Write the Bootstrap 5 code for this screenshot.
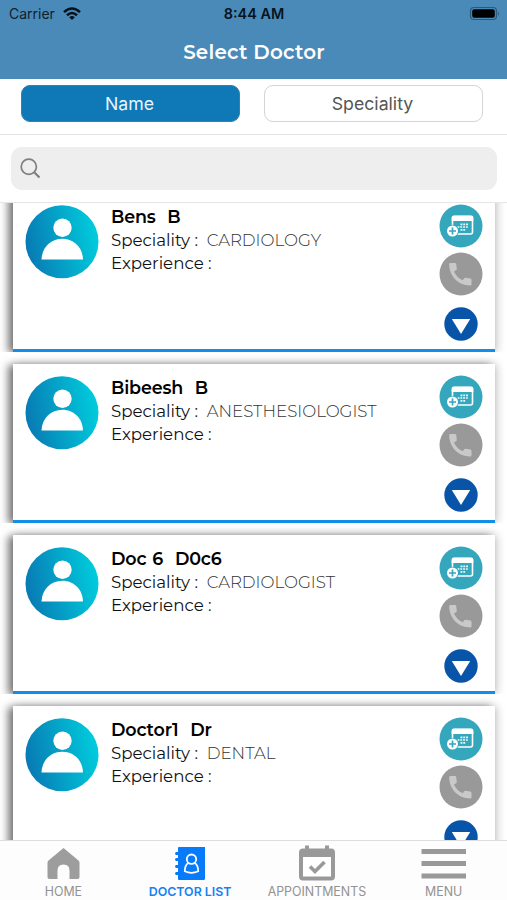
<!DOCTYPE html>
<html lang="en">
<head>
<meta charset="utf-8">
<meta name="viewport" content="width=device-width, initial-scale=1">
<title>Select Doctor</title>
<link href="https://cdn.jsdelivr.net/npm/bootstrap@5.3.0/dist/css/bootstrap.min.css" rel="stylesheet">
<style>
body{height:900px;font-family:Inter,"Liberation Sans",sans-serif;background:#fff;color:#111}
svg{display:block;flex:none}
.geo{font-family:Montserrat,Inter,sans-serif}
.app-top{height:79px;background:#4a8ab8}
.status{height:27px;padding:0 7px 0 9px;color:#10202c;font-size:14px}
.status>*{flex:1 1 0}
.clock{font-size:14.4px;font-weight:600;color:#06141f;padding-right:1px}
.screen-title{height:52px;font-size:19.9px;font-weight:600;letter-spacing:.22px;padding-left:1px}
.segments{height:56px;padding:6px 24px 0 21px;gap:24px;border-bottom:1px solid #e4e4e4}
.seg{height:37px;border-radius:9px;font-size:17.7px;padding:0 2px 0 0;line-height:35px;border:1px solid #d6d3d5;color:#555;background:#fff}
.seg.on{background:#0f78b6;border-color:#2d82b8;color:#e9f5fc}
.finder{height:68px;padding:12px 10px 12px 11px;border-bottom:1px solid #e6e6e6}
.finder-box{height:43px;border-radius:11px;background:#eee;padding-left:9px}
.doctors{min-height:0}
.slot{height:171px;padding:12px 12px 0 13px;overflow:hidden}
.slot:first-child{margin-top:-22px}
.doc{height:159px;background:#fff;border-bottom:3.5px solid #118ee8;padding:12px 12px 0 12px;box-shadow:-5px 1px 8px rgba(0,0,0,.5),2px 0 9px rgba(0,0,0,.2)}
.info{padding-left:12px;font-size:16.65px;line-height:23px;white-space:pre}
.doc-name{font-size:17.5px;font-weight:600;color:#000;letter-spacing:-.15px;word-spacing:1.2px;line-height:24px}
.val{font-weight:300;color:#333}
.acts{width:44px;margin-top:-1px}
.tabs{height:60px;border-top:1px solid #ddd;background:#fdfdfd;font-size:12.4px;color:#929292}
.tab-item{width:126.75px;padding-top:4px}
.tab-item svg{height:37px}
.tab-item span{line-height:17px;margin-top:1px;white-space:nowrap}
.tab-item.on{color:#1680f5;font-weight:600}
</style>
</head>
<body class="d-flex flex-column overflow-hidden m-0">
<svg width="0" height="0" class="position-absolute" aria-hidden="true">
<defs>
<linearGradient id="teal" x1="0" y1=".6" x2="1" y2=".4"><stop offset="0" stop-color="#0879b3"/><stop offset="1" stop-color="#00cddd"/></linearGradient>
<symbol id="person" viewBox="0 0 74 74"><circle cx="37" cy="36.700" r="36.500" fill="url(#teal)"/><circle cx="37.500" cy="22.800" r="9.200" fill="#fff"/><path d="M16.500 54.500C17 42 26 33.800 37.300 33.800S57.600 42 58 54.500Z" fill="#fff"/></symbol>
<symbol id="book" viewBox="0 0 44 44"><circle cx="22" cy="22" r="21.500" fill="#35a7bd"/><rect x="13.500" y="12.500" width="20" height="17.500" rx="2" fill="none" stroke="#fff" stroke-width="1.600"/><path d="M12.700 13.500q0-2 2-2h17.600q2 0 2 2V17H12.700Z" fill="#fff"/><path d="M21.500 20.300h8M18.500 23h11M21.500 25.800h5.500" stroke="#e8fbff" stroke-width="1.700" stroke-dasharray="1.900 .9"/><circle cx="13.500" cy="27" r="6.300" fill="#35a7bd"/><circle cx="13.500" cy="27" r="5.500" fill="#fff"/><path d="M10 27h7M13.500 23.500v7" stroke="#35a7bd" stroke-width="1.700"/></symbol>
<symbol id="call" viewBox="0 0 44 44"><circle cx="22" cy="22" r="21.500" fill="#999"/><path d="M11.500 11h4.500q1.100 0 1.200 1l.6 5q0 .9-.8 1.300l-2 1.200q2.500 6 8.800 8.800l1.400-2q.5-.8 1.400-.6l4.800.9q1.100.2 1.100 1.300v4.300q0 1.300-1.300 1.300C19 33.500 10.200 24 10.200 12.300q0-1.300 1.300-1.300Z" fill="#c9c9c9"/></symbol>
<symbol id="drop" viewBox="0 0 34 34"><circle cx="17" cy="17" r="16.700" fill="#0854a9"/><path d="M7.800 12h18.400L17 27Z" fill="#fff"/></symbol>
</defs>
</svg>

<header class="app-top flex-shrink-0">
  <div class="status d-flex align-items-center">
    <div class="d-flex align-items-center gap-2"><span>Carrier</span>
      <svg width="18" height="14" viewBox="0 0 18 14" fill="none" stroke="#06121a" stroke-width="2.500"><path d="M1 5.200Q9-2.200 17 5.200M4 8.300q5-4.500 10 0"/><path d="M6.200 10.200q2.800-2.400 5.600 0L9 13Z" fill="#06121a" stroke="none"/></svg>
    </div>
    <div class="clock text-center">8:44 AM</div>
    <div class="d-flex justify-content-end"><svg width="31" height="15" viewBox="0 0 31 15"><rect x="1.500" y="1.500" width="26" height="12" rx="3.500" fill="none" stroke="#2d5979" stroke-width="1.200"/><rect x="3.200" y="3.200" width="22.600" height="8.600" rx="2" fill="#000"/><path d="M29 5.200q2 2.300 0 4.600Z" fill="#2d5979"/></svg></div>
  </div>
  <h1 class="screen-title geo text-white d-flex align-items-center justify-content-center m-0">Select Doctor</h1>
</header>

<div class="segments d-flex flex-shrink-0">
  <button class="seg on btn flex-fill w-50">Name</button>
  <button class="seg btn flex-fill w-50">Speciality</button>
</div>
<div class="finder flex-shrink-0">
  <div class="finder-box d-flex align-items-center"><svg width="22" height="22" viewBox="0 0 22 22" fill="none" stroke="#808080"><circle cx="8.800" cy="8.800" r="7.600" stroke-width="1.700"/><path d="m14 14 5.500 5.500" stroke-width="2.200"/></svg></div>
</div>

<main class="doctors flex-fill overflow-hidden">
  <div class="slot"><article class="doc d-flex"><svg width="74" height="74"><use href="#person"/></svg><div class="info geo flex-fill"><div class="doc-name"><span>Bens  B</span></div><div><span class="key">Speciality :</span>  <span class="val">CARDIOLOGY</span></div><div><span class="key">Experience :</span></div></div><div class="acts d-flex flex-column align-items-center"><svg width="44" height="44"><use href="#book"/></svg><svg width="44" height="44" class="mt-1"><use href="#call"/></svg><svg width="34" height="34" class="mt-auto mb-2"><use href="#drop"/></svg></div></article></div>
  <div class="slot"><article class="doc d-flex"><svg width="74" height="74"><use href="#person"/></svg><div class="info geo flex-fill"><div class="doc-name"><span>Bibeesh  B</span></div><div><span class="key">Speciality :</span>  <span class="val">ANESTHESIOLOGIST</span></div><div><span class="key">Experience :</span></div></div><div class="acts d-flex flex-column align-items-center"><svg width="44" height="44"><use href="#book"/></svg><svg width="44" height="44" class="mt-1"><use href="#call"/></svg><svg width="34" height="34" class="mt-auto mb-2"><use href="#drop"/></svg></div></article></div>
  <div class="slot"><article class="doc d-flex"><svg width="74" height="74"><use href="#person"/></svg><div class="info geo flex-fill"><div class="doc-name"><span>Doc 6  D0c6</span></div><div><span class="key">Speciality :</span>  <span class="val">CARDIOLOGIST</span></div><div><span class="key">Experience :</span></div></div><div class="acts d-flex flex-column align-items-center"><svg width="44" height="44"><use href="#book"/></svg><svg width="44" height="44" class="mt-1"><use href="#call"/></svg><svg width="34" height="34" class="mt-auto mb-2"><use href="#drop"/></svg></div></article></div>
  <div class="slot"><article class="doc d-flex"><svg width="74" height="74"><use href="#person"/></svg><div class="info geo flex-fill"><div class="doc-name"><span>Doctor1  Dr</span></div><div><span class="key">Speciality :</span>  <span class="val">DENTAL</span></div><div><span class="key">Experience :</span></div></div><div class="acts d-flex flex-column align-items-center"><svg width="44" height="44"><use href="#book"/></svg><svg width="44" height="44" class="mt-1"><use href="#call"/></svg><svg width="34" height="34" class="mt-auto mb-2"><use href="#drop"/></svg></div></article></div>
</main>

<nav class="tabs d-flex flex-shrink-0">
  <div class="tab-item d-flex flex-column align-items-center"><svg width="36" height="37" viewBox="0 0 36 37"><path d="M18.500 3 33.500 15.500q1 .8 1 2V32q0 2-2 2h-8V25.500q0-6-6-6t-6 6V34h-8q-2 0-2-2V17.500q0-1.200 1-2Z" fill="#9d9d9d"/></svg><span>HOME</span></div>
  <div class="tab-item on d-flex flex-column align-items-center"><svg width="34" height="37" viewBox="0 0 34 37"><path d="M5 3q0-1 1-1h26v31.500q0 1.500-1.500 1.500H6q-1 0-1-1v-4H3q-2-1.500 0-3h2v-4H3q-2-1.500 0-3h2v-4H3q-2-1.500 0-3h2v-3H3q-2-1.500 0-3h2Z" fill="#087bfb"/><g fill="none" stroke="#fff" stroke-width="1.800"><circle cx="18.500" cy="14.200" r="4.700"/><path d="M15.300 18q-3.500 2-3.500 8.300 6.700 3 13.400 0 0-6.300-3.500-8.300"/></g></svg><span>DOCTOR LIST</span></div>
  <div class="tab-item d-flex flex-column align-items-center"><svg width="36" height="37" viewBox="0 0 36 37"><path d="M6 .5h4v3h16v-3h4v3h2q4 0 4 4v24q0 4-4 4H4q-4 0-4-4v-24q0-4 4-4h2Z" fill="#999"/><path d="M4 12h28v19.500H4Z" fill="#fff"/><path d="m11 21.500 5 5 9.500-9.500" fill="none" stroke="#999" stroke-width="3.600"/></svg><span>APPOINTMENTS</span></div>
  <div class="tab-item d-flex flex-column align-items-center"><svg width="45" height="37" viewBox="0 0 45 37"><path d="M.5 6.500h44.500M.5 18.500h44.500M.5 31h44.500" stroke="#999" stroke-width="5"/></svg><span>MENU</span></div>
</nav>
<script src="https://cdn.jsdelivr.net/npm/bootstrap@5.3.0/dist/js/bootstrap.bundle.min.js"></script>
</body>
</html>
